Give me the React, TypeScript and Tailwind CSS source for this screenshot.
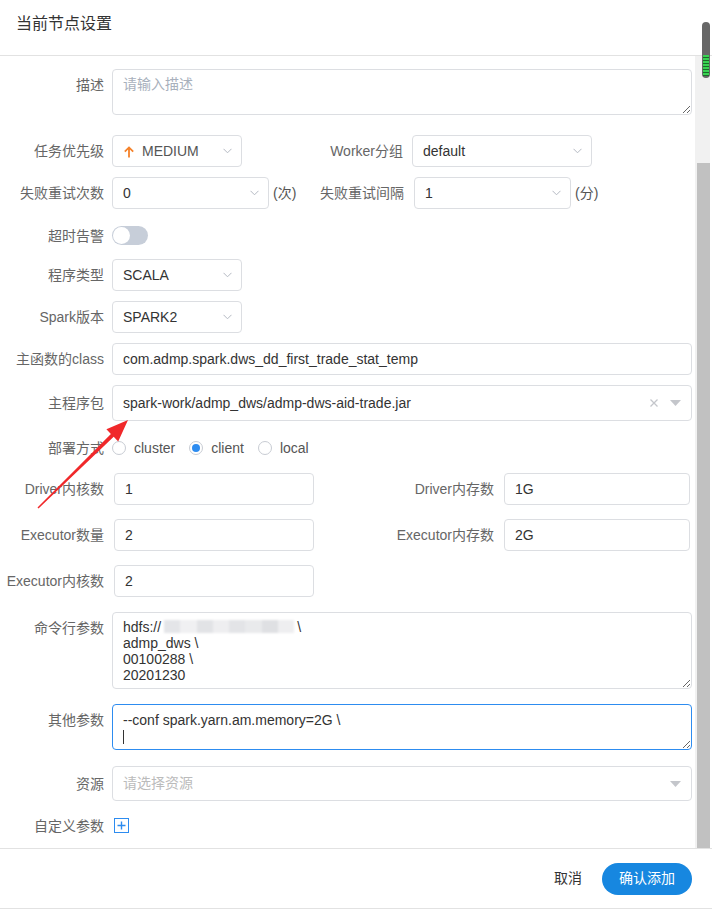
import React from "react";

const font = "font-[Liberation_Sans,Noto_Sans_CJK_SC,sans-serif]";

function Chevron() {
  return (
    <svg width="9" height="6" viewBox="0 0 9 6" className="shrink-0">
      <polyline points="0.5,0.8 4.5,4.8 8.5,0.8" fill="none" stroke="#b4b9c2" strokeWidth="1" />
    </svg>
  );
}

function Caret() {
  return (
    <svg width="11" height="6" viewBox="0 0 11 6" className="shrink-0">
      <polygon points="0,0 11,0 5.5,6" fill="#c4c6cb" />
    </svg>
  );
}

function Select({ width, children }: { width: string; children: React.ReactNode }) {
  return (
    <div
      className={`${width} h-[32px] shrink-0 border border-[#dcdee2] rounded-[4px] flex items-center justify-between pl-[10px] pr-[9px] text-[14px] text-[#333]`}
    >
      <div className="flex items-center">{children}</div>
      <Chevron />
    </div>
  );
}

function Label({ w = "w-[104px]", top = false, children }: { w?: string; top?: boolean; children: React.ReactNode }) {
  return (
    <div
      className={`${w} shrink-0 text-right text-[14px] leading-[20px] text-[#666] whitespace-nowrap ${top ? "pt-[6px]" : ""}`}
    >
      {children}
    </div>
  );
}

function Input({ width, value }: { width: string; value: string }) {
  return (
    <div
      className={`${width} h-[32px] shrink-0 border border-[#dcdee2] rounded-[4px] flex items-center pl-[10px] text-[14px] text-[#333]`}
    >
      {value}
    </div>
  );
}

function Radio({ checked, label }: { checked?: boolean; label: string }) {
  return (
    <div className="flex items-center mr-[14px]">
      <span className="w-[14px] h-[14px] rounded-full border border-[#c8ccd3] flex items-center justify-center bg-white">
        {checked && <span className="w-[8px] h-[8px] rounded-full bg-[#2d8cf0]" />}
      </span>
      <span className="ml-[8px] text-[14px] text-[#555]">{label}</span>
    </div>
  );
}

export default function App() {
  return (
    <div className={`w-[712px] h-[909px] bg-white relative overflow-hidden ${font}`}>
      <header className="h-[56px] border-b border-[#e2e2e2] pl-[16px] pt-[13px] text-[16px] leading-[22px] text-[#333]">
        当前节点设置
      </header>

      <div className="flex h-[792px]">
        <div className="flex-1 flex flex-col">
          {/* 描述 */}
          <div className="flex gap-[8px] mt-[13px]">
            <Label top>描述</Label>
            <textarea
              readOnly
              placeholder="请输入描述"
              className="w-[580px] h-[46px] border border-[#dcdee2] rounded-[4px] px-[10px] py-[6px] text-[14px] leading-[16px] text-[#333] placeholder:text-[#a8b0bc] outline-none"
            />
          </div>

          {/* 任务优先级 / Worker分组 */}
          <div className="flex items-center mt-[20px] h-[32px]">
            <Label>任务优先级</Label>
            <div className="ml-[8px]">
              <Select width="w-[130px]">
                <svg width="12" height="12" viewBox="0 0 12 12" className="mr-[7px] mt-[2px]">
                  <path d="M6 11.5V1.5M1.8 5.6L6 1.4l4.2 4.2" fill="none" stroke="#f5822a" strokeWidth="1.8" />
                </svg>
                <span className="text-[#555]">MEDIUM</span>
              </Select>
            </div>
            <Label w="w-[161px]">Worker分组</Label>
            <div className="ml-[9px]">
              <Select width="w-[180px]">default</Select>
            </div>
          </div>

          {/* 失败重试 */}
          <div className="flex items-center mt-[10px] h-[32px]">
            <Label>失败重试次数</Label>
            <div className="ml-[8px]">
              <Select width="w-[157px]">0</Select>
            </div>
            <span className="ml-[4px] w-[24px] text-[14px] text-[#555]">(次)</span>
            <Label w="w-[107px]">失败重试间隔</Label>
            <div className="ml-[10px]">
              <Select width="w-[157px]">1</Select>
            </div>
            <span className="ml-[4px] text-[14px] text-[#555]">(分)</span>
          </div>

          {/* 超时告警 */}
          <div className="flex items-center mt-[10px] h-[32px] pt-[1px]">
            <Label>超时告警</Label>
            <div className="ml-[8px] w-[36px] h-[19px] rounded-full bg-[#c7ced9] flex items-center p-[1px]">
              <span className="w-[17px] h-[17px] rounded-full bg-white" />
            </div>
          </div>

          {/* 程序类型 */}
          <div className="flex items-center mt-[8px] h-[32px]">
            <Label>程序类型</Label>
            <div className="ml-[8px]">
              <Select width="w-[130px]">SCALA</Select>
            </div>
          </div>

          {/* Spark版本 */}
          <div className="flex items-center mt-[10px] h-[32px]">
            <Label>Spark版本</Label>
            <div className="ml-[8px]">
              <Select width="w-[130px]">SPARK2</Select>
            </div>
          </div>

          {/* 主函数的class */}
          <div className="flex items-center mt-[10px] h-[32px] gap-[8px]">
            <Label>主函数的class</Label>
            <Input width="w-[580px]" value="com.admp.spark.dws_dd_first_trade_stat_temp" />
          </div>

          {/* 主程序包 */}
          <div className="flex items-center mt-[10px] h-[36px] gap-[8px]">
            <Label>主程序包</Label>
            <div className="w-[580px] h-[36px] border border-[#dcdee2] rounded-[4px] flex items-center pl-[10px] pr-[10px] text-[14px] text-[#333]">
              <span className="flex-1">spark-work/admp_dws/admp-dws-aid-trade.jar</span>
              <svg width="8" height="8" viewBox="0 0 8 8" className="mr-[12px]">
                <path d="M0.5 0.5l7 7M7.5 0.5l-7 7" stroke="#c4c6cb" strokeWidth="1.3" />
              </svg>
              <Caret />
            </div>
          </div>

          {/* 部署方式 */}
          <div className="flex items-center mt-[17px] h-[20px]">
            <Label>部署方式</Label>
            <div className="ml-[8px] flex items-center">
              <Radio label="cluster" />
              <Radio checked label="client" />
              <Radio label="local" />
            </div>
          </div>

          {/* Driver */}
          <div className="flex items-center mt-[15px] h-[32px]">
            <Label>Driver内核数</Label>
            <div className="ml-[10px]">
              <Input width="w-[200px]" value="1" />
            </div>
            <Label w="w-[180px]">Driver内存数</Label>
            <div className="ml-[10px]">
              <Input width="w-[186px]" value="1G" />
            </div>
          </div>

          {/* Executor */}
          <div className="flex items-center mt-[14px] h-[32px]">
            <Label>Executor数量</Label>
            <div className="ml-[10px]">
              <Input width="w-[200px]" value="2" />
            </div>
            <Label w="w-[180px]">Executor内存数</Label>
            <div className="ml-[10px]">
              <Input width="w-[186px]" value="2G" />
            </div>
          </div>

          <div className="flex items-center mt-[14px] h-[32px]">
            <Label>Executor内核数</Label>
            <div className="ml-[10px]">
              <Input width="w-[200px]" value="2" />
            </div>
          </div>

          {/* 命令行参数 */}
          <div className="flex gap-[8px] mt-[15px]">
            <Label top>命令行参数</Label>
            <div className="relative">
              <textarea
                readOnly
                value={"hdfs://" + " ".repeat(35) + "\\\nadmp_dws \\\n00100288 \\\n20201230"}
                className="w-[580px] h-[77px] border border-[#dcdee2] rounded-[4px] px-[10px] py-[6px] text-[14px] leading-[16px] text-[#333] outline-none block"
              />
              {/* masked host */}
              <div className="absolute left-[52px] top-[8px] w-[130px] h-[13px] flex blur-[1px]">
                <span className="flex-1 bg-[#e4e5e8]" />
                <span className="flex-1 bg-[#f0f0f2]" />
                <span className="flex-1 bg-[#e2e3e6]" />
                <span className="flex-1 bg-[#eeeef0]" />
                <span className="flex-1 bg-[#e3e4e7]" />
                <span className="flex-1 bg-[#e9eaec]" />
                <span className="flex-1 bg-[#dfe0e3]" />
                <span className="flex-1 bg-[#eeeef0]" />
              </div>
            </div>
          </div>

          {/* 其他参数 */}
          <div className="flex gap-[8px] mt-[15px]">
            <Label top>其他参数</Label>
            <div className="relative">
              <textarea
                readOnly
                value={"--conf spark.yarn.am.memory=2G \\\n"}
                className="w-[580px] h-[46px] border border-[#2d8cf0] rounded-[4px] px-[10px] py-[7px] text-[14px] leading-[16px] text-[#333] outline-none block"
              />
              <span className="absolute left-[11px] top-[26px] w-px h-[14px] bg-[#333]" />
            </div>
          </div>

          {/* 资源 */}
          <div className="flex items-center mt-[16px] h-[35px] gap-[8px]">
            <Label>资源</Label>
            <div className="w-[580px] h-[35px] border border-[#dcdee2] rounded-[4px] flex items-center justify-between pl-[10px] pr-[10px] text-[14px] text-[#bbb]">
              请选择资源
              <Caret />
            </div>
          </div>

          {/* 自定义参数 */}
          <div className="flex items-center mt-[15px] h-[20px]">
            <Label>自定义参数</Label>
            <svg width="15" height="15" viewBox="0 0 15 15" className="ml-[10px] mt-[-1px]">
              <rect x="0.5" y="0.5" width="14" height="14" fill="none" stroke="#2d8cf0" />
              <path d="M7.5 3.5v8M3.5 7.5h8" stroke="#2d8cf0" strokeWidth="1.4" />
            </svg>
          </div>
        </div>

        {/* scrollbar */}
        <div className="w-[15px] mr-[2px] bg-[#f1f1f1] flex flex-col">
          <div className="h-[107px]" />
          <div className="flex-1 ml-[2px] bg-[#c1c1c1]" />
        </div>
      </div>

      <footer className="h-[61px] border-t border-b border-[#e2e2e2] flex items-center justify-end pr-[20px]">
        <span className="text-[14px] text-[#333] mr-[20px]">取消</span>
        <button className="w-[90px] h-[32px] rounded-full bg-[#1787e0] text-white text-[14px]">确认添加</button>
      </footer>

      {/* floating scroll indicator */}
      <div className="absolute left-[702px] top-[22px] w-[8px] h-[56px] rounded-full bg-[#676767] overflow-hidden flex flex-col">
        <div className="h-[33px]" />
        <div className="mx-[1px] h-[21px] bg-[repeating-linear-gradient(to_bottom,#39d353_0px,#39d353_2px,#1c6b2a_2px,#1c6b2a_3px)]" />
      </div>

      {/* red annotation arrow */}
      <svg className="absolute left-0 top-0 pointer-events-none" width="712" height="909">
        <polygon
          points="37.5,507.5 110.9,434 106.4,429.3 128,420 118.2,441.5 113.7,436.8 38.5,508.5"
          fill="#f0282a"
        />
      </svg>
    </div>
  );
}
